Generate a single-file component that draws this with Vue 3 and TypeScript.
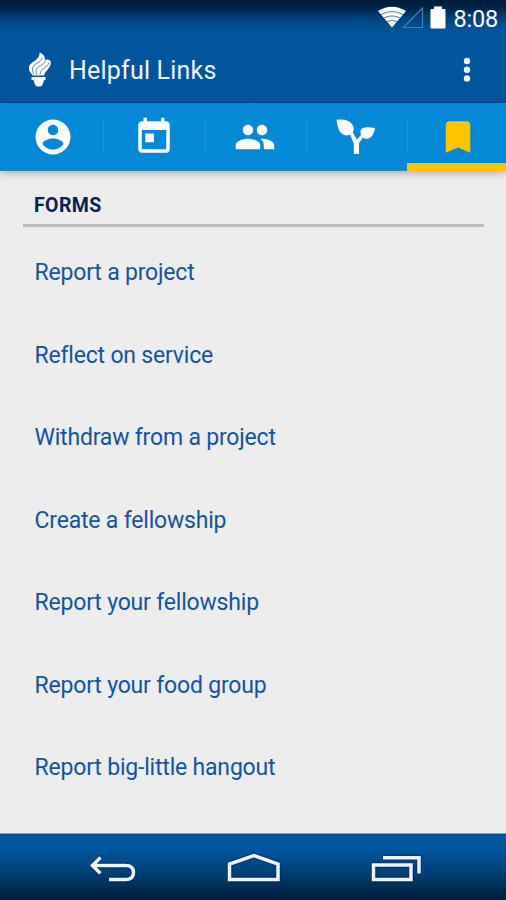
<script setup lang="ts">
const links: string[] = [
  'Report a project',
  'Reflect on service',
  'Withdraw from a project',
  'Create a fellowship',
  'Report your fellowship',
  'Report your food group',
  'Report big-little hangout',
]
</script>

<template>
  <div class="screen">
    <div class="status">
      <svg class="wifi" width="30" height="22" viewBox="0 0 30 22">
        <path d="M1 5Q15-3.500 29 5L15 21.500Z" fill="#fff" />
        <path d="M4 8.600Q15 2.500 26 8.600M7 12.200Q15 7.700 23 12.200M10 15.800Q15 13 20 15.800" fill="none" stroke="#4a80aa" stroke-width="1" />
      </svg>
      <svg class="signal" width="22" height="23" viewBox="0 0 22 23">
        <path d="M1.500 21.500H20.500V2Z" fill="none" stroke="#4a80aa" stroke-width="1.200" />
      </svg>
      <svg class="battery" width="16" height="23" viewBox="0 0 16 23">
        <path d="M4 .5h8v2.500h2.500q1 0 1 1V21.500q0 1-1 1H1.500q-1 0-1-1V4q0-1 1-1H4Z" fill="#fff" />
      </svg>
      <span class="time">8:08</span>
    </div>

    <header class="bar">
      <svg class="torch" width="24" height="36" viewBox="0 0 24 36">
        <path d="M11.500.5C16 2.500 17.500 5 16.500 8C20 6.800 22.500 8 23 10C22.500 17 17.500 18 16 23.500H5C2 21 .3 18 1 14.500C2 10 12.500 8 11.500.5Z" fill="#fff" />
        <path d="M14 5.500C13.500 11 4.500 11.500 4.500 17Q4.500 20 6 22.500M17.500 8.500C17 13 8.500 14 8 18.500Q8 21 9 23M21 10.500C20 15.500 12.500 16 12 22.500" fill="none" stroke="#4580b8" stroke-width=".9" />
        <path d="M3.500 25H17.500V28H16Q15 33.500 12.500 34.500H9Q6.500 33.500 5.500 28H3.500Z" fill="#fff" />
      </svg>
      <h1>Helpful Links</h1>
      <svg class="more" width="8" height="26" viewBox="0 0 8 26">
        <circle cx="4" cy="4" r="3.200" /><circle cx="4" cy="12.700" r="3.200" /><circle cx="4" cy="21.400" r="3.200" />
      </svg>
    </header>

    <nav class="tabs">
      <div class="tab">
        <svg width="42" height="42" viewBox="0 0 24 24"><path d="M12 2C6.480 2 2 6.480 2 12s4.480 10 10 10 10-4.480 10-10S17.520 2 12 2zm0 3c1.660 0 3 1.340 3 3s-1.340 3-3 3-3-1.340-3-3 1.340-3 3-3zm0 14.200c-2.500 0-4.710-1.280-6-3.220.030-1.990 4-3.080 6-3.080 1.990 0 5.970 1.090 6 3.080-1.290 1.940-3.500 3.220-6 3.220z" /></svg>
      </div>
      <div class="tab">
        <svg class="calendar" width="42" height="42" viewBox="0 0 24 24"><path d="M19 3h-1V1h-2v2H8V1H6v2H5c-1.110 0-1.990.9-1.990 2L3 19c0 1.100.89 2 2 2h14c1.100 0 2-.9 2-2V5c0-1.100-.9-2-2-2zm0 16H5V8h14v11zM7 10h5v5H7z" /></svg>
      </div>
      <div class="tab">
        <svg width="42" height="42" viewBox="0 0 24 24"><path d="M16 11c1.660 0 2.990-1.340 2.990-3S17.660 5 16 5c-1.660 0-3 1.340-3 3s1.340 3 3 3zm-8 0c1.660 0 2.990-1.340 2.990-3S9.660 5 8 5C6.340 5 5 6.340 5 8s1.340 3 3 3zm0 2c-2.330 0-7 1.170-7 3.500V19h14v-2.500c0-2.330-4.670-3.500-7-3.500zm8 0c-.29 0-.62.020-.97.050 1.160.84 1.970 1.970 1.970 3.450V19h6v-2.500c0-2.330-4.670-3.500-7-3.500z" /></svg>
      </div>
      <div class="tab">
        <svg width="40" height="36" viewBox="0 0 40 36">
          <path d="M.5.800Q13-.5 17 6.500Q18.500 10.500 16.800 13.500L21 20.500L25 16Q23 10 28 8.800Q31 7.800 39 9Q37.500 18 32.500 19.500Q29.500 20.500 27 18.500L23 24V35H17.800V24.500L14 15.500Q9 18 4.500 13.500Q1.500 10 .5.800Z" />
        </svg>
      </div>
      <div class="tab active">
        <svg width="42" height="42" viewBox="0 0 24 24"><path d="M17 3H7c-1.100 0-1.990.9-1.990 2L5 21l7-3 7 3V5c0-1.100-.9-2-2-2z" /></svg>
      </div>
    </nav>

    <main>
      <h2>FORMS</h2>
      <ul>
        <li v-for="link in links" :key="link"><a>{{ link }}</a></li>
      </ul>
    </main>

    <footer>
      <svg width="50" height="32" viewBox="0 0 50 32">
        <path d="M4 12.500H37.500Q45.500 12.500 45.500 19.500T37.500 26.500H21M12.500 4.500L4.500 12.500L12.500 20.500" />
      </svg>
      <svg width="56" height="32" viewBox="0 0 56 32">
        <path d="M3.500 26.500V11L28 2.500L52 11V26.500Z" />
      </svg>
      <svg width="52" height="32" viewBox="0 0 52 32">
        <path d="M3.500 12V26.500H41V12ZM13 4.800H49V20.500" />
      </svg>
    </footer>
  </div>
</template>

<style>
body {
  margin: 0;
}
</style>

<style scoped>
.screen {
  width: 506px;
  height: 900px;
  display: flex;
  flex-direction: column;
  overflow: hidden;
  background: #ededed;
  font-family: Roboto, "Liberation Sans", sans-serif;
}
.screen > * {
  flex-shrink: 0;
  box-sizing: border-box;
}
svg {
  display: block;
  flex-shrink: 0;
}
.status {
  height: 37px;
  display: flex;
  align-items: flex-start;
  justify-content: flex-end;
  padding: 6px 8px 0 0;
  background: linear-gradient(#001a38 0, #002447 8px, #00427a 18px, #00549a 30px, #00569c);
}
.signal {
  margin-left: -5px;
}
.battery {
  margin-left: 6px;
}
.time {
  margin-left: 7px;
  color: #fff;
  font-size: 23.500px;
  line-height: 26px;
  letter-spacing: -0.200px;
}
.bar {
  height: 66px;
  display: flex;
  align-items: center;
  padding: 0 34px 0 28px;
  background: linear-gradient(#00569c, #005499);
  border-bottom: 1px solid #004b8b;
}
h1 {
  flex: 1;
  margin: 2px 0 0 17px;
  color: #eff3fb;
  font-size: 25px;
  font-weight: 400;
  line-height: 30px;
  letter-spacing: 0.200px;
}
.more {
  fill: #f4f8ff;
  margin-right: 1px;
}
.tabs {
  height: 67.500px;
  display: flex;
  padding-left: 2px;
  background: #0288d4;
  border-bottom: 1px solid #2f80b3;
  box-shadow: 0 2px 8px rgba(0, 0, 0, 0.28);
}
.tab {
  position: relative;
  flex: 0 0 101.250px;
  box-sizing: border-box;
  padding-top: 1px;
  display: flex;
  align-items: center;
  justify-content: center;
  fill: #fff;
}
.tab + .tab::before {
  content: '';
  position: absolute;
  left: 0;
  top: 17px;
  width: 1px;
  height: 34px;
  background: #2293d5;
}
.active {
  fill: #ffc400;
}
.active::after {
  content: '';
  position: absolute;
  left: 0;
  right: 0;
  bottom: -1px;
  height: 8px;
  background: #ffc400;
}
main {
  flex: 1;
  padding: 20px 22px 0 23px;
}
h2 {
  margin: 0;
  height: 33px;
  padding-left: 11px;
  border-bottom: 3px solid #bdbdbd;
  color: #091f56;
  font-size: 19.500px;
  font-weight: 700;
  line-height: 29px;
  letter-spacing: 0.400px;
}
ul {
  margin: 5px 0 0;
  padding: 0 0 0 11.500px;
  list-style: none;
}
li {
  height: 82.500px;
  display: flex;
  align-items: center;
  color: #14539d;
  font-size: 23px;
  letter-spacing: -0.190px;
}
footer {
  height: 67px;
  display: flex;
  align-items: center;
  justify-content: space-between;
  padding: 4px 84px 0 88px;
  background: linear-gradient(#00569c, #00549a 25%, #003f73 60%, #001c37);
  border-top: 1px solid #7f9fc3;
}
footer svg {
  fill: none;
  stroke: #eff3ff;
  stroke-width: 3.500;
  filter: drop-shadow(0 0 1px #001060);
}
</style>
